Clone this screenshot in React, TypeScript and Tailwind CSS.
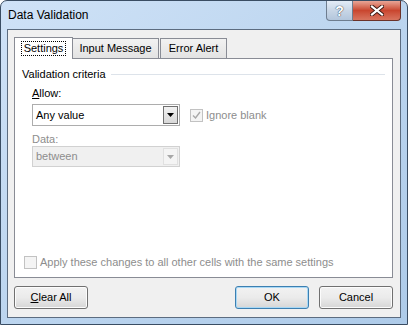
import React from "react";

function Arrow({ disabled }: { disabled?: boolean }) {
  return (
    <svg width="7" height="4" viewBox="0 0 7 4">
      <path d="M0 0h7L3.5 4z" fill={disabled ? "#a7a7a7" : "#000"} />
    </svg>
  );
}

function Check({ checked, disabled }: { checked?: boolean; disabled?: boolean }) {
  return (
    <span
      className={`flex h-[13px] w-[13px] items-center justify-center border ${
        disabled ? "border-[#c2c2c2] bg-[#f4f4f4]" : "border-[#8e8f8f] bg-white"
      }`}
    >
      {checked && (
        <svg width="9" height="9" viewBox="0 0 9 9">
          <path d="M1 4.5l2.5 2.5L8 1" stroke="#a8a8a8" strokeWidth="1.4" fill="none" />
        </svg>
      )}
    </span>
  );
}

function Button({ children, primary }: { children: React.ReactNode; primary?: boolean }) {
  return (
    <button
      className={`flex h-[23px] w-[74px] items-center justify-center rounded-[3px] border bg-gradient-to-b from-[#f2f2f2] via-[#ebebeb] to-[#d6d6d6] text-[11px] text-black ${
        primary ? "border-[#3c7fb1] shadow-[inset_0_0_0_1px_#a8d8f5]" : "border-[#707070] shadow-[inset_0_0_0_1px_#fcfcfc]"
      }`}
    >
      {children}
    </button>
  );
}

export default function App() {
  return (
    <div
      className="flex h-[325px] w-[408px] flex-col rounded-t-[7px] border border-[#3a4d63] bg-gradient-to-br from-[#cfe2f7] via-[#bcd5ef] to-[#aecbe9] text-black"
      style={{ fontFamily: '"Liberation Sans", Arial, sans-serif' }}
    >
      <div className="flex h-[28px] items-start justify-between">
        <span className="pl-[7px] pt-[7px] text-[12px] leading-[14px] text-black">Data Validation</span>
        <div className="mr-[6px] flex">
          <div className="flex h-[20px] w-[27px] items-center justify-center rounded-bl-[4px] border border-t-0 border-[#6e7d8f] bg-gradient-to-b from-[#e3ecf7] via-[#c8d6e6] to-[#b3c6dc] text-[14px] font-bold leading-none text-white [text-shadow:0_0_1px_#2d3a4b,0_0_1px_#2d3a4b]">
            ?
          </div>
          <div className="flex h-[20px] w-[48px] items-center justify-center rounded-br-[4px] border border-l-0 border-t-0 border-[#6b3229] bg-gradient-to-b from-[#e8a596] via-[#c9462f] to-[#d8745f]">
            <svg width="14" height="11" viewBox="0 0 14 11">
              <path d="M2 1.5l10 8M12 1.5l-10 8" stroke="#3b1812" strokeWidth="4" strokeLinecap="square" />
              <path d="M2 1.5l10 8M12 1.5l-10 8" stroke="#fff" strokeWidth="2.2" strokeLinecap="square" />
            </svg>
          </div>
        </div>
      </div>

      <div className="mx-[6px] flex flex-1 flex-col border border-[#5c6c80] bg-[#f0f0f0] px-[6px] pt-[7px] text-[11px] leading-[13px]">
        <div className="flex items-end">
          <div className="relative z-10 -mb-px flex h-[22px] w-[59px] items-center justify-center border border-b-0 border-[#898c95] bg-white">
            <span className="border border-dotted border-black px-[2px] leading-[13px]">Settings</span>
          </div>
          <div className="flex h-[20px] w-[86px] items-center justify-center border border-b-0 border-l-0 border-[#898c95] bg-gradient-to-b from-[#f2f2f2] to-[#e3e3e3]">
            Input Message
          </div>
          <div className="ml-[1px] flex h-[20px] w-[67px] items-center justify-center border border-b-0 border-[#898c95] bg-gradient-to-b from-[#f2f2f2] to-[#e3e3e3]">
            Error Alert
          </div>
        </div>

        <div className="flex h-[220px] w-[379px] flex-col border border-[#898c95] bg-white px-[7px]">
          <div className="mt-[9px] flex items-center gap-[5px]">
            <span>Validation criteria</span>
            <span className="h-px flex-1 bg-[#dde3ea]" />
          </div>

          <div className="ml-[10px] mt-[6px]">
            <div>
              <span className="underline">A</span>llow:
            </div>
            <div className="mt-[4px] flex items-center">
              <div className="flex h-[22px] w-[148px] items-center justify-between border border-[#adadad] pl-[3px] pr-[1px]">
                <span>Any value</span>
                <div className="flex h-[18px] w-[15px] items-center justify-center border border-[#707070] bg-gradient-to-b from-[#f2f2f2] to-[#d8d8d8]">
                  <Arrow />
                </div>
              </div>
              <div className="ml-[10px] flex items-center gap-[3px] text-[#8d8d8d]">
                <Check checked disabled />
                <span>Ignore blank</span>
              </div>
            </div>
            <div className="mt-[7px] text-[#8d8d8d]">Data:</div>
            <div className="mt-[0px] flex h-[21px] w-[148px] items-center justify-between border border-[#d1d1d1] bg-[#f0f0f0] pl-[3px] pr-[1px] text-[#8d8d8d]">
              <span>between</span>
              <div className="flex h-[17px] w-[15px] items-center justify-center border border-[#e0e0e0] bg-[#f4f4f4]">
                <Arrow disabled />
              </div>
            </div>
          </div>

          <div className="mt-auto mb-[8px] flex items-center gap-[3px] pl-[2px] text-[#8d8d8d]">
            <Check disabled />
            <span>Apply these changes to all other cells with the same settings</span>
          </div>
        </div>

        <div className="mt-[8px] flex items-center">
          <Button>
            <span>
              <span className="underline">C</span>lear All
            </span>
          </Button>
          <div className="ml-auto flex gap-[10px] pr-[1px]">
            <Button primary>OK</Button>
            <Button>Cancel</Button>
          </div>
        </div>
      </div>
      <div className="h-[6px]" />
    </div>
  );
}
